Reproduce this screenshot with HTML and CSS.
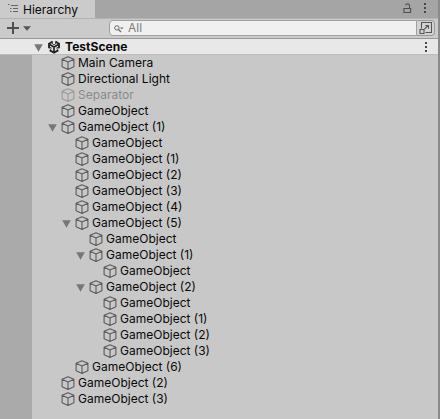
FILE: index.html
```html
<!DOCTYPE html>
<html lang="en">
<head>
<meta charset="utf-8">
<title>Hierarchy</title>
<link rel="stylesheet" href="styles.css">
</head>
<body>
<svg width="0" height="0" class="defs">
  <symbol id="cube" viewBox="0 0 14 14"><path d="M7 .7 12.9 3.3V10.7L7 13.4 1.1 10.7V3.3ZM1.1 3.3 7 6 12.9 3.3M7 6V13.4" fill="none" stroke="currentColor" stroke-width="1.1" stroke-linejoin="round"/></symbol>
  <symbol id="arrow" viewBox="0 0 9 8"><path d="M.2.2H8.8L4.5 7.8Z" fill="currentColor"/></symbol>
  <symbol id="dots" viewBox="0 0 4 12"><path d="M1 1H3V3H1ZM1 5H3V7H1ZM1 9H3V11H1Z" fill="currentColor"/></symbol>
</svg>
<div class="panel">
  <header class="tabs">
    <div class="tab">
      <svg class="list" width="12" height="10" viewBox="0 0 12 10"><path d="M0 .5H1.5M3 1.5H10M2 4.5H3.5M5 4.5H10M2 7.5H3.5M5 7.5H10" stroke="#666" fill="none"/></svg>
      <span>Hierarchy</span>
    </div>
    <svg class="lock" width="9" height="11" viewBox="0 0 9 11"><path d="M.9 5.5H7.6V9.5H.9ZM6.5 5.5V2.4Q6.5 .9 4.6 .9 2.7 .9 2.6 2.2" fill="none" stroke="#505050" stroke-width="1.1"/></svg>
    <svg class="menu" width="4" height="12"><use href="#dots"/></svg>
  </header>
  <div class="toolbar">
    <svg class="plus" width="12" height="12" viewBox="0 0 12 12"><path d="M6 0V12M0 6H12" stroke="#505050" stroke-width="2"/></svg>
    <svg class="drop" width="8" height="5" viewBox="0 0 8 5"><path d="M0 .3H8L4 4.7Z" fill="#555"/></svg>
    <div class="search">
      <svg width="10" height="8" viewBox="0 0 10 8"><circle cx="2.9" cy="2.9" r="2.2" fill="none" stroke="#666"/><path d="M4.5 4.5 7 7" stroke="#666" stroke-width="1.2"/><path d="M6 2.5H9.6L7.8 4.3Z" fill="#666"/></svg>
      <span>All</span>
    </div>
    <div class="picker"><svg width="14" height="14" viewBox="0 0 14 14"><path d="M2.5 7.5V1.5H12.5V11.5H6.5M1 8.5H5V12.5H1ZM5.5 8 9.2 4.4M6.2 4.5H9.5V7.8" fill="none" stroke="#555" stroke-width="1.1"/></svg></div>
  </div>
  <div class="row scene">
    <svg class="arrow" width="9" height="8"><use href="#arrow"/></svg>
    <svg class="unity" width="14" height="14" viewBox="0 0 14 14"><path d="M5.6 1.6 2 3.8V8M12 8V3.8L8.4 1.6M2.8 10.4 7 12.6 11.2 10.4" fill="none" stroke="#262626" stroke-width="1.9"/><path d="M7 7V12M7 7 2.5 4.5M7 7 11.5 4.5" fill="none" stroke="#262626" stroke-width="1.7"/><path d="M5.4 1.5V4L7 4.8 8.6 4V1.5M1.7 8.5 4 7.3V9.2L2.5 10.4M12.3 8.5 10 7.3V9.2L11.5 10.4" fill="none" stroke="#404040" stroke-width=".9"/></svg>
    <span>TestScene</span>
    <svg class="menu" width="4" height="12"><use href="#dots"/></svg>
  </div>
  <main class="body">
    <div class="tree">
      <div class="row"><svg class="cube"><use href="#cube"/></svg><span>Main Camera</span></div>
      <div class="row"><svg class="cube"><use href="#cube"/></svg><span>Directional Light</span></div>
      <div class="row off"><svg class="cube"><use href="#cube"/></svg><span>Separator</span></div>
      <div class="row"><svg class="cube"><use href="#cube"/></svg><span>GameObject</span></div>
      <div class="row open"><svg class="arrow"><use href="#arrow"/></svg><svg class="cube"><use href="#cube"/></svg><span>GameObject (1)</span></div>
      <div class="group">
        <div class="row"><svg class="cube"><use href="#cube"/></svg><span>GameObject</span></div>
        <div class="row"><svg class="cube"><use href="#cube"/></svg><span>GameObject (1)</span></div>
        <div class="row"><svg class="cube"><use href="#cube"/></svg><span>GameObject (2)</span></div>
        <div class="row"><svg class="cube"><use href="#cube"/></svg><span>GameObject (3)</span></div>
        <div class="row"><svg class="cube"><use href="#cube"/></svg><span>GameObject (4)</span></div>
        <div class="row open"><svg class="arrow"><use href="#arrow"/></svg><svg class="cube"><use href="#cube"/></svg><span>GameObject (5)</span></div>
        <div class="group">
          <div class="row"><svg class="cube"><use href="#cube"/></svg><span>GameObject</span></div>
          <div class="row open"><svg class="arrow"><use href="#arrow"/></svg><svg class="cube"><use href="#cube"/></svg><span>GameObject (1)</span></div>
          <div class="group">
            <div class="row"><svg class="cube"><use href="#cube"/></svg><span>GameObject</span></div>
          </div>
          <div class="row open"><svg class="arrow"><use href="#arrow"/></svg><svg class="cube"><use href="#cube"/></svg><span>GameObject (2)</span></div>
          <div class="group">
            <div class="row"><svg class="cube"><use href="#cube"/></svg><span>GameObject</span></div>
            <div class="row"><svg class="cube"><use href="#cube"/></svg><span>GameObject (1)</span></div>
            <div class="row"><svg class="cube"><use href="#cube"/></svg><span>GameObject (2)</span></div>
            <div class="row"><svg class="cube"><use href="#cube"/></svg><span>GameObject (3)</span></div>
          </div>
        </div>
        <div class="row"><svg class="cube"><use href="#cube"/></svg><span>GameObject (6)</span></div>
      </div>
      <div class="row"><svg class="cube"><use href="#cube"/></svg><span>GameObject (2)</span></div>
      <div class="row"><svg class="cube"><use href="#cube"/></svg><span>GameObject (3)</span></div>
    </div>
  </main>
</div>
</body>
</html>
```
FILE: styles.css
```css
* { box-sizing: border-box; }
body { margin: 0; font: 12px/16px Inter, sans-serif; color: #090909; background: #c8c8c8; }
.defs { position: absolute; }
svg { flex: none; display: block; }
span { white-space: nowrap; }
.panel { width: 440px; height: 419px; display: flex; flex-direction: column; border-right: 2px solid #8a8a8a; overflow: hidden; }
.tabs { height: 18px; flex: none; display: flex; background: #a5a5a5; }
.tab { width: 95px; background: #cbcbcb; display: flex; padding: 2px 0 0 8px; }
.tab .list { margin: 2px 3px 0 0; }
.lock { margin: 3px 0 0 308px; }
.tabs .menu { margin: 2px 0 0 11px; }
.menu { color: #484848; }
.toolbar { height: 21px; flex: none; display: flex; background: #cbcbcb; border-bottom: 1px solid #999; border-top: 1px solid #b2b2b2; padding-top: 1px; }
.plus { margin: 2px 0 0 7px; }
.drop { margin: 6px 0 0 4px; }
.search { width: 308px; height: 16px; margin-left: 78px; border: 1px solid #a0a0a0; border-radius: 4px 0 0 4px; background: #f0f0f0; display: flex; color: #7c7c7c; line-height: 14px; }
.search svg { margin: 4px 4px 0 4px; }
.picker { width: 18px; height: 16px; border: 1px solid #999; border-left: 0; border-radius: 0 4px 4px 0; background: #d4d4d4; padding: 0 0 0 2px; }
.row { height: 16px; flex: none; display: flex; align-items: center; }
.row span { margin-left: 4px; }
.scene { background: #e8e8e8; border-bottom: 1px solid #bbb; font-weight: 700; padding-left: 34px; letter-spacing: .06px; }
.arrow { width: 9px; height: 8px; margin-top: 2px; color: #777; }
.unity { margin-left: 4px; }
.scene .menu { margin-left: auto; margin-right: 10px; }
.body { flex: 1; display: flex; padding-left: 32px; background: linear-gradient(to right, #aaa 32px, #c8c8c8 32px); }
.tree { padding-left: 28px; }
.group { padding-left: 14px; }
.cube { width: 14px; height: 14px; margin-left: .5px; color: #5c5c5c; }
.row .cube + span { margin-left: 3.5px; }
.open { margin-left: -12px; }
.open .cube { margin-left: 3.5px; }
.off { color: #8a8a8a; }
.off .cube { color: #9b9b9b; }
```
